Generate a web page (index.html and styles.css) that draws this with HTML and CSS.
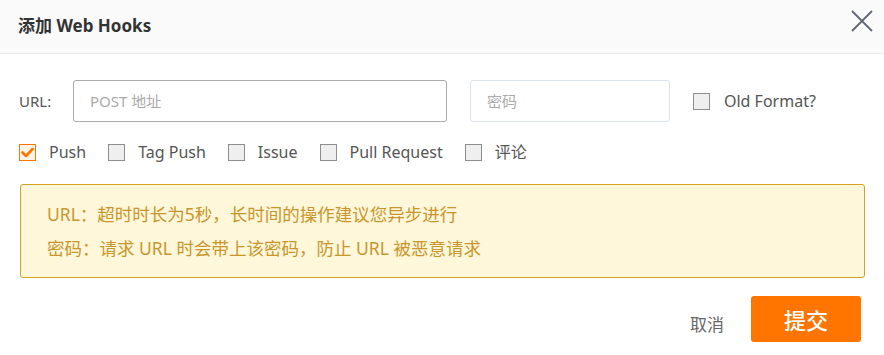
FILE: index.html
```html
<!DOCTYPE html>
<html lang="zh">
<head>
<meta charset="utf-8">
<title>添加 Web Hooks</title>
<link rel="stylesheet" href="styles.css">
</head>
<body>
<div class="dialog">
  <div class="header">
    <div class="title">添加 Web Hooks</div>
    <button class="close" type="button" aria-label="关闭">
      <svg width="22" height="22" viewBox="0 0 22 22"><path d="M1 1 L21 21 M21 1 L1 21" stroke="#606773" stroke-width="1.8" fill="none"/></svg>
    </button>
  </div>
  <div class="body">
    <div class="form-row">
      <label class="field-label">URL:</label>
      <input class="input input-url" type="text" placeholder="POST 地址">
      <input class="input input-pwd" type="text" placeholder="密码">
      <label class="check">
        <span class="box"></span>
        <span class="check-text">Old Format?</span>
      </label>
    </div>
    <div class="check-row">
      <label class="check">
        <span class="box checked">
          <svg width="13" height="11" viewBox="0 0 13 11"><path d="M1.5 5.5 L5 9 L11.5 2" stroke="#ff7500" stroke-width="2.6" fill="none" stroke-linecap="round" stroke-linejoin="round"/></svg>
        </span>
        <span class="check-text">Push</span>
      </label>
      <label class="check">
        <span class="box"></span>
        <span class="check-text">Tag Push</span>
      </label>
      <label class="check">
        <span class="box"></span>
        <span class="check-text">Issue</span>
      </label>
      <label class="check">
        <span class="box"></span>
        <span class="check-text">Pull Request</span>
      </label>
      <label class="check">
        <span class="box"></span>
        <span class="check-text">评论</span>
      </label>
    </div>
    <div class="alert">
      <p>URL：超时时长为5秒，长时间的操作建议您异步进行</p>
      <p>密码：请求 URL 时会带上该密码，防止 URL 被恶意请求</p>
    </div>
  </div>
  <div class="footer">
    <span class="cancel">取消</span>
    <button class="submit" type="button">提交</button>
  </div>
</div>
</body>
</html>
```
FILE: styles.css
```css
* { box-sizing: border-box; }
html, body { margin: 0; padding: 0; background: #fff; }
body {
  font-family: "Noto Sans", "Noto Sans CJK SC", sans-serif;
  color: #555;
}
.dialog { width: 884px; }
.header {
  height: 54px;
  background: #fafafa;
  border-bottom: 1px solid #e7e9ec;
  display: flex;
  align-items: center;
  justify-content: space-between;
  padding: 0 11px 0 18px;
}
.title {
  font-size: 17px;
  font-weight: 700;
  color: #333;
  margin-top: -4px;
}
.close {
  border: none;
  background: none;
  padding: 0;
  width: 22px;
  height: 22px;
  margin-top: -12px;
  cursor: pointer;
}
.close svg { display: block; }
.body { padding: 26px 19px 0 19px; }
.form-row {
  display: flex;
  align-items: center;
  height: 42px;
}
.field-label {
  font-size: 15px;
  color: #555;
  width: 54px;
}
.input {
  height: 42px;
  border-radius: 3px;
  font-family: inherit;
  font-size: 15px;
  padding: 0 16px;
  outline: none;
  color: #333;
  background: #fff;
}
.input::placeholder { color: #aaa; }
.input-url {
  width: 374px;
  border: 1px solid #a9abae;
}
.input-pwd {
  width: 200px;
  margin-left: 23px;
  border: 1px solid #dde3ea;
}
.form-row .check { margin-left: 23px; }
.check-row {
  display: flex;
  align-items: center;
  gap: 22px;
  margin-top: 22px;
  height: 17px;
}
.check {
  display: flex;
  align-items: center;
  gap: 14px;
  font-size: 16px;
  color: #555;
  cursor: pointer;
}
.check-row .check { gap: 13px; }
.box {
  width: 17px;
  height: 17px;
  border: 1px solid #8e8e8e;
  background: #efefef;
  display: flex;
  align-items: center;
  justify-content: center;
  flex-shrink: 0;
}
.box.checked {
  border-color: #ff7500;
  background: #fff4ea;
}
.box svg { display: block; }
.check-text { line-height: 17px; }
.alert {
  margin: 23px 0 0 1px;
  border: 1px solid #d5a21f;
  background: #fff7da;
  border-radius: 3px;
  padding: 12px 26px;
  color: #c8962c;
  font-size: 17.5px;
}
.alert p {
  margin: 0;
  line-height: 34px;
}
.footer {
  display: flex;
  justify-content: flex-end;
  align-items: center;
  padding: 18px 23px 0 0;
}
.cancel {
  font-size: 17px;
  color: #666;
  margin-right: 27px;
  margin-top: 8px;
}
.submit {
  width: 110px;
  height: 46px;
  border: none;
  border-radius: 3px;
  background: #ff7500;
  color: #fff;
  font-family: inherit;
  font-size: 22px;
  font-weight: 500;
  cursor: pointer;
}
```
